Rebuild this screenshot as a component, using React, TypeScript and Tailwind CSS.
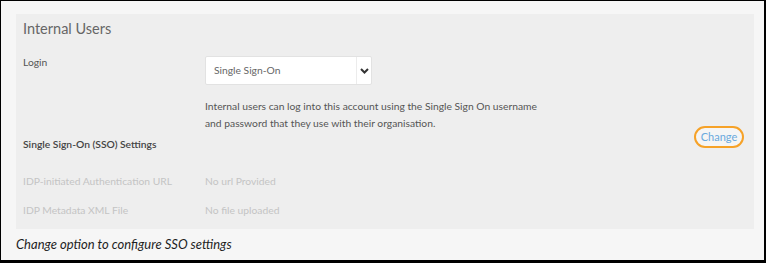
export default function App() {
  return (
    <div className="w-[766px] h-[263px] overflow-hidden">
      <div
        className="w-[766px] h-[263px] bg-[#f6f6f6] border-black border-t border-l border-r-2 border-b-[3px] pl-[15px] pt-[13px] flex flex-col"
        style={{ fontFamily: "Lato, 'Open Sans', sans-serif" }}
      >
        <section className="w-[738px] h-[215px] bg-[#eeeeee] pl-[7px] pr-[10px] flex flex-col">
          <h2 className="text-[14.5px] leading-[20px] text-[#666666] mt-[5px]">Internal Users</h2>

          <div className="flex mt-[18px]">
            <div className="w-[182px] text-[10.3px] leading-[14px] text-[#555555] mt-[-2px]">Login</div>
            <div className="flex w-[167px] h-[29px] mt-[-1px] bg-white border border-[#e2e2e2] rounded-[2px]">
              <div className="flex-1 flex items-center pl-[8px] text-[10.3px] text-[#666666]">Single Sign-On</div>
              <div className="w-[15px] border-l border-[#ececec] flex items-center justify-center">
                <svg width="9" height="6" viewBox="0 0 9 6">
                  <path d="M1 1l3.5 3.5L8 1" fill="none" stroke="#333" strokeWidth="2" />
                </svg>
              </div>
            </div>
          </div>

          <div className="flex">
            <div className="w-[182px]" />
            <p className="mt-[13px] text-[10.3px] leading-[17px] text-[#555555]">
              Internal users can log into this account using the Single Sign On username
              <br />
              and password that they use with their organisation.
            </p>
          </div>

          <div className="flex items-start justify-between mt-[-6px]">
            <div className="text-[10.3px] leading-[14px] font-semibold text-[#444444] mt-[11px]">Single Sign-On (SSO) Settings</div>
            <button className="w-[50px] h-[22px] rounded-full border-2 border-[#f6a228] bg-[#f5f5f5] text-[11px] text-[#6aa9dd] flex items-center justify-center">
              Change
            </button>
          </div>

          <div className="flex text-[10.3px] leading-[16px] text-[#c4c4c4] mt-[22px]">
            <div className="w-[182px]">IDP-initiated Authentication URL</div>
            <div>No url Provided</div>
          </div>
          <div className="flex text-[10.3px] leading-[16px] text-[#c4c4c4] mt-[13px]">
            <div className="w-[182px]">IDP Metadata XML File</div>
            <div>No file uploaded</div>
          </div>
        </section>

        <p className="mt-[6px] text-[13px] italic text-[#1e1e1e]">Change option to configure SSO settings</p>
      </div>
    </div>
  );
}
